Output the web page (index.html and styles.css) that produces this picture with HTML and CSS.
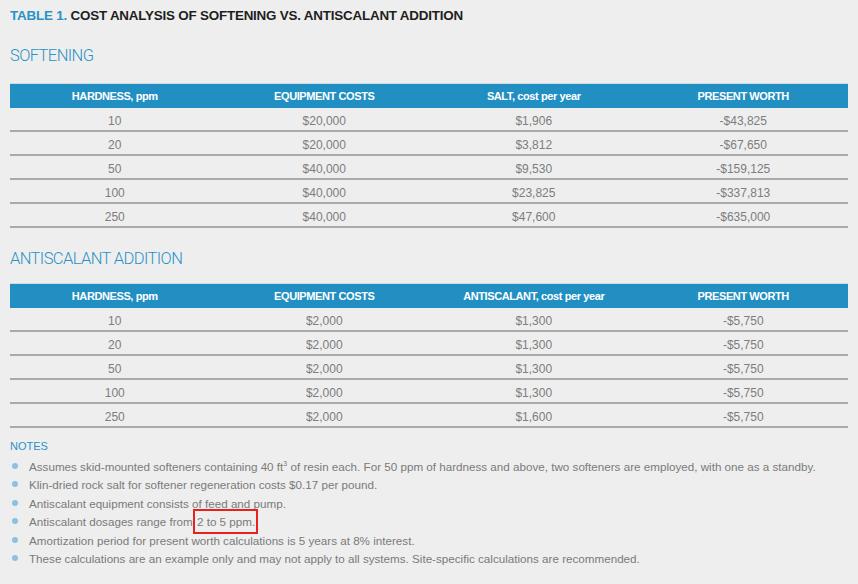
FILE: index.html
```html
<!DOCTYPE html>
<html>
<head>
<meta charset="utf-8">
<link rel="stylesheet" href="styles.css">
</head>
<body>
<div class="page">
  <h1 class="title"><span class="num">TABLE 1.</span> COST ANALYSIS OF SOFTENING VS. ANTISCALANT ADDITION</h1>

  <h2 class="section">SOFTENING</h2>
  <table class="data">
    <thead>
      <tr><th>HARDNESS, <span class="lc">ppm</span></th><th>EQUIPMENT COSTS</th><th>SALT, <span class="lc">cost per year</span></th><th>PRESENT WORTH</th></tr>
    </thead>
    <tbody>
      <tr><td>10</td><td>$20,000</td><td>$1,906</td><td>-$43,825</td></tr>
      <tr><td>20</td><td>$20,000</td><td>$3,812</td><td>-$67,650</td></tr>
      <tr><td>50</td><td>$40,000</td><td>$9,530</td><td>-$159,125</td></tr>
      <tr><td>100</td><td>$40,000</td><td>$23,825</td><td>-$337,813</td></tr>
      <tr><td>250</td><td>$40,000</td><td>$47,600</td><td>-$635,000</td></tr>
    </tbody>
  </table>

  <h2 class="section second">ANTISCALANT ADDITION</h2>
  <table class="data second">
    <thead>
      <tr><th>HARDNESS, <span class="lc">ppm</span></th><th>EQUIPMENT COSTS</th><th>ANTISCALANT, <span class="lc">cost per year</span></th><th>PRESENT WORTH</th></tr>
    </thead>
    <tbody>
      <tr><td>10</td><td>$2,000</td><td>$1,300</td><td>-$5,750</td></tr>
      <tr><td>20</td><td>$2,000</td><td>$1,300</td><td>-$5,750</td></tr>
      <tr><td>50</td><td>$2,000</td><td>$1,300</td><td>-$5,750</td></tr>
      <tr><td>100</td><td>$2,000</td><td>$1,300</td><td>-$5,750</td></tr>
      <tr><td>250</td><td>$2,000</td><td>$1,600</td><td>-$5,750</td></tr>
    </tbody>
  </table>

  <h3 class="notes-title">NOTES</h3>
  <ul class="notes">
    <li>Assumes skid-mounted softeners containing 40 ft<sup>3</sup> of resin each. For 50 ppm of hardness and above, two softeners are employed, with one as a standby.</li>
    <li>Klin-dried rock salt for softener regeneration costs $0.17 per pound.</li>
    <li>Antiscalant equipment consists of feed and pump.</li>
    <li>Antiscalant dosages range from <span class="mark">2 to 5 ppm.</span></li>
    <li>Amortization period for present worth calculations is 5 years at 8% interest.</li>
    <li>These calculations are an example only and may not apply to all systems. Site-specific calculations are recommended.</li>
  </ul>
</div>
</body>
</html>
```

FILE: styles.css
```css
html, body {
  margin: 0;
  padding: 0;
  background: #eeeeee;
}
.page {
  padding: 7px 10px 0 10px;
  font-family: "Liberation Sans", Arial, sans-serif;
}
.title {
  margin: 0;
  font-family: "Liberation Sans Narrow", "Liberation Sans", sans-serif;
  font-weight: bold;
  font-size: 13.4px;
  line-height: 18px;
  color: #1e1e1e;
  letter-spacing: -0.2px;
}
.title .num {
  color: #2a92c6;
}
.section {
  margin: 20px 0 0 0;
  font-family: Roboto, "Liberation Sans", sans-serif;
  font-weight: 300;
  font-size: 16.5px;
  line-height: 22px;
  color: #2a92c6;
  letter-spacing: -0.6px;
}
.data {
  width: 100%;
  margin-top: 16px;
  border-collapse: collapse;
  table-layout: fixed;
}
.data.second {
  margin-top: 13px;
}
.data thead tr {
  background: #218fc2;
  border-top: 1px solid #cfdbe3;
}
.data th {
  height: 24px;
  padding: 0;
  font-family: "Liberation Sans Narrow", "Liberation Sans", sans-serif;
  font-weight: bold;
  font-size: 11px;
  letter-spacing: -0.4px;
  color: #ffffff;
  text-align: center;
}
.data td {
  height: 16px;
  padding: 6px 0 0 0;
  line-height: 14px;
  vertical-align: top;
  border-bottom: 2px solid #a9a9a9;
  font-size: 12px;
  color: #7d7d7d;
  text-align: center;
}
.notes-title {
  margin: 11px 0 0 0;
  font-family: "Liberation Sans Narrow", "Liberation Sans", sans-serif;
  font-weight: normal;
  font-size: 11px;
  line-height: 14px;
  color: #2a92c6;
}
.notes {
  list-style: none;
  margin: 5px 0 0 0;
  padding: 0;
}
.notes li {
  position: relative;
  padding-left: 19px;
  font-size: 11.65px;
  line-height: 18.4px;
  color: #7a7a7a;
}
.notes li::before {
  content: "";
  position: absolute;
  left: 2px;
  top: 5px;
  width: 6px;
  height: 6px;
  border-radius: 50%;
  background: #8cc1e3;
}
.notes sup {
  font-size: 7px;
  line-height: 0;
  vertical-align: 5px;
}
.mark {
  border: 2px solid #e82020;
  padding: 4px 1px 4px 2px;
  margin-left: -3px;
}
```
